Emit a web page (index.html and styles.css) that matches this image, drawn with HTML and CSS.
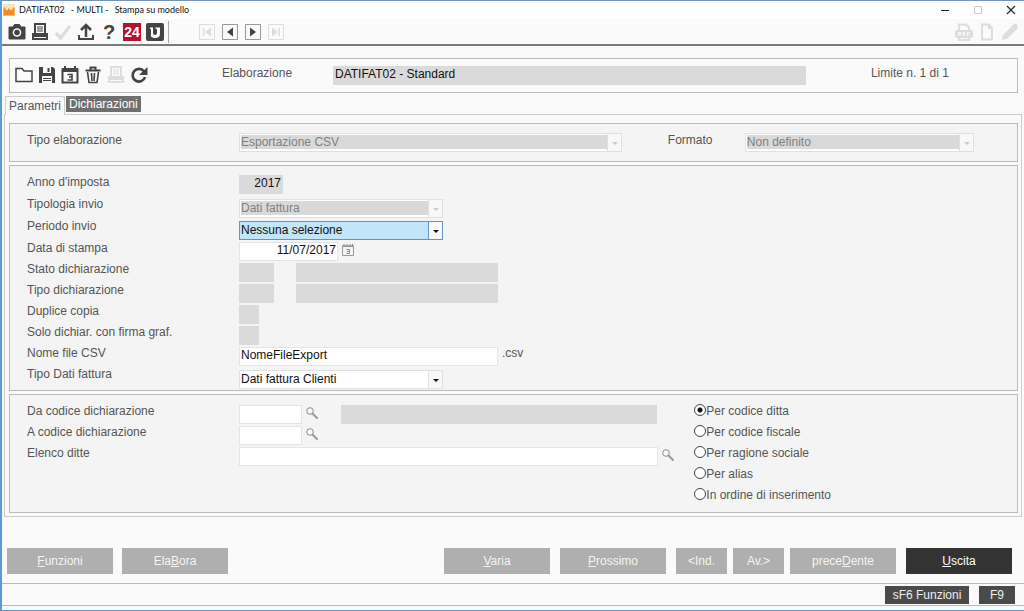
FILE: index.html
```html
<!DOCTYPE html>
<html lang="it">
<head>
<meta charset="utf-8">
<title>DATIFAT02 - MULTI - Stampa su modello</title>
<link rel="stylesheet" href="styles.css">
</head>
<body>
<svg class="symbols" aria-hidden="true">
  <symbol id="search" viewBox="0 0 12 12"><circle cx="4" cy="4" r="3.3" fill="#f8f8f8" stroke="#8c8c8c"/><path d="M6.7 6.7 11 11" stroke="#999" stroke-width="2" stroke-linecap="round"/></symbol>
  <symbol id="printer" viewBox="0 0 18 18"><path d="M4 1h10v10H4z" fill="none" stroke="currentColor" stroke-width="2"/><path d="M6 4h6M6 6h6M6 8h6" stroke="currentColor"/><path d="M1 10h2v2h12v-2h2v7H1z" fill="currentColor"/><path d="M3 14.5h12" stroke="#fafafa"/></symbol>
</svg>
<div class="window">
  <header class="titlebar">
    <svg class="app-icon" viewBox="0 0 12 12"><path d="M0 0h12v12H0z" fill="#f6b95b"/><path d="M0 0h12v3L6 8 0 3z" fill="#fbe3bb"/><path d="m1 3 3 4 2-3 2 3 3-4v8H1z" fill="#ef8f22"/></svg>
    <h1 class="title"><span>DATIFAT02</span><span>- MULTI -</span><span>Stampa su modello</span></h1>
    <div class="window-controls">
      <button aria-label="Riduci"><svg viewBox="0 0 10 10"><path d="M1 5.5h8" stroke="#222"/></svg></button>
      <button aria-label="Ingrandisci" disabled><svg viewBox="0 0 10 10"><path d="M1.5 1.5h7v7h-7z" fill="none" stroke="#ccc"/></svg></button>
      <button aria-label="Chiudi"><svg viewBox="0 0 10 10"><path d="m1 1 8 8M9 1 1 9" stroke="#222" stroke-width="1.1"/></svg></button>
    </div>
  </header>

  <nav class="toolbar">
    <div class="icons">
      <button aria-label="Istantanea"><svg viewBox="0 0 18 18"><path d="M1 4h4l1.500-2.500h5L13 4h4v12H1z" fill="currentColor" stroke="currentColor" stroke-linejoin="round"/><circle cx="9" cy="9.500" r="4.300" fill="#fafafa"/><circle cx="9" cy="9.500" r="2.800" fill="currentColor"/></svg></button>
      <button aria-label="Stampa"><svg><use href="#printer"/></svg></button>
      <button aria-label="Conferma" disabled><svg viewBox="0 0 18 18"><path d="m2 10 4.500 5L16 3" fill="none" stroke="currentColor" stroke-width="3.500"/></svg></button>
      <button aria-label="Esporta"><svg viewBox="0 0 18 18"><path d="M9 3v11M4 7l5-5 5 5" fill="none" stroke="currentColor" stroke-width="2.500"/><path d="M2 12v4h14v-4" fill="none" stroke="currentColor" stroke-width="2"/></svg></button>
      <button class="glyph" aria-label="Aiuto">?</button>
      <button class="glyph red" aria-label="24">24</button>
      <button aria-label="Unico"><svg viewBox="0 0 18 18"><rect x="0" y="0" width="18" height="18" rx="2" fill="currentColor"/><path d="M4 4.500h3V10q0 2 2 2t2-2V6H9.500V4.500H14V11q0 4-5 4T5 11V6H4z" fill="#fff"/></svg></button>
    </div>
    <div class="icons nav-icons">
      <button aria-label="Primo" disabled><svg viewBox="0 0 18 18"><path d="M1.500 1.500h15v15h-15z" fill="none" stroke="currentColor"/><path d="M5 5h1.500v8H5zM13 4.500v9L7 9z" fill="currentColor"/></svg></button>
      <button aria-label="Indietro"><svg viewBox="0 0 18 18"><path d="M1.500 1.500h15v15h-15z" fill="none" stroke="#999"/><path d="M12 4.500v9L6 9z" fill="currentColor"/></svg></button>
      <button aria-label="Avanti"><svg viewBox="0 0 18 18"><path d="M1.500 1.500h15v15h-15z" fill="none" stroke="#999"/><path d="M6 4.500v9L12 9z" fill="currentColor"/></svg></button>
      <button aria-label="Ultimo" disabled><svg viewBox="0 0 18 18"><path d="M1.500 1.500h15v15h-15z" fill="none" stroke="currentColor"/><path d="M11.500 5H13v8h-1.500zM5 4.500v9L11 9z" fill="currentColor"/></svg></button>
    </div>
    <div class="icons end">
      <button aria-label="PDF" disabled><svg viewBox="0 0 18 18"><path d="M4 8V1.500h7L14 4.500V8" fill="none" stroke="currentColor" stroke-width="2"/><rect x="0" y="7" width="18" height="8" rx="2" fill="currentColor"/><path d="M4 14v3h10v-3" fill="none" stroke="currentColor" stroke-width="2"/><path d="M3.500 13V9.500h2v2h-2M8 9.500v3h1.500l.5-1.500-.5-1.500zM12.500 13V9.500H15M12.500 11.500h2" fill="none" stroke="#fafafa"/></svg></button>
      <button aria-label="Documento" disabled><svg viewBox="0 0 18 18"><path d="M4 1.500h7L14 5v11.500H4z" fill="none" stroke="currentColor" stroke-width="2"/><path d="M10 1v5h5z" fill="currentColor"/></svg></button>
      <button aria-label="Modifica" disabled><svg viewBox="0 0 18 18"><path d="m1 17 1-5L13 1q2-1 3 .500T17 5L6 16z" fill="currentColor"/></svg></button>
    </div>
  </nav>

  <main class="content">
    <section class="panel summary">
      <div class="icons">
        <button aria-label="Apri"><svg viewBox="0 0 18 18"><path d="M1 15.500v-13h6l2 2.500h8v10.500z" fill="none" stroke="currentColor" stroke-width="1.500"/></svg></button>
        <button aria-label="Salva"><svg viewBox="0 0 18 18"><path d="M1 1h14l2 2v14H1z" fill="currentColor"/><path d="M5 1v6h8V1M4 17v-7h10v7" fill="#fafafa"/><path d="M9.500 2h2v4h-2zM5 12h8v1H5zm0 2h8v1H5z" fill="currentColor"/></svg></button>
        <button aria-label="Calendario"><svg viewBox="0 0 18 18"><path d="M1.500 3.500h15v13h-15z" fill="none" stroke="currentColor" stroke-width="2"/><path d="M1 2h16v4H1zM3 0h2v2H3zm10 0h2v2h-2z" fill="currentColor"/><path d="M6.500 8.500h4.500v5.500H6.500M8 11h3" fill="none" stroke="currentColor" stroke-width="1.600"/></svg></button>
        <button aria-label="Elimina"><svg viewBox="0 0 18 18"><path d="M1.500 4.500h15M6.500 4V1.500h5V4" fill="none" stroke="currentColor" stroke-width="2"/><path d="m3.500 6 1.500 10.500h8L14.500 6M7.500 7l.5 8M10.500 7l-.5 8" fill="none" stroke="currentColor" stroke-width="1.600"/></svg></button>
        <button aria-label="Stampa elenco" disabled><svg><use href="#printer"/></svg></button>
        <button aria-label="Aggiorna"><svg viewBox="0 0 18 18"><path d="M14 5.500A6.300 6.300 0 1 0 15 11" fill="none" stroke="currentColor" stroke-width="2.700"/><path d="M17.500 1v8H9z" fill="currentColor"/></svg></button>
      </div>
      <label for="elaborazione">Elaborazione</label>
      <input id="elaborazione" class="field locked" value="DATIFAT02 - Standard" readonly>
      <span class="limit">Limite n. 1 di 1</span>
    </section>

    <div class="tabs" role="tablist">
      <button class="tab selected" role="tab" aria-selected="true">Parametri</button>
      <button class="tab" role="tab" aria-selected="false">Dichiarazioni</button>
    </div>

    <form class="page">
      <section class="panel kind">
        <label for="tipo">Tipo elaborazione</label>
        <div class="combo"><select id="tipo" disabled><option>Esportazione CSV</option></select></div>
        <label for="formato">Formato</label>
        <div class="combo"><select id="formato" disabled><option>Non definito</option></select></div>
      </section>

      <section class="panel details">
        <div class="row tall"><label for="anno">Anno d'imposta</label><input id="anno" class="field locked number w-year" value="2017" readonly></div>
        <div class="row tall"><label for="tipologia">Tipologia invio</label><div class="combo w-combo"><select id="tipologia" disabled><option>Dati fattura</option></select></div></div>
        <div class="row tall"><label for="periodo">Periodo invio</label><div class="combo w-combo active"><select id="periodo"><option>Nessuna selezione</option></select></div></div>
        <div class="row"><label for="data">Data di stampa</label><input id="data" class="field number w-date" value="11/07/2017"><button type="button" class="mini" aria-label="Scegli data"><svg viewBox="0 0 12 12"><path d="M.5 2.500h11v9H.5z" fill="none" stroke="#999"/><path d="M0 2h12M2 0v2M5 0v2M8 0v2M10.500 0v2" stroke="#888"/><path d="M4.500 5.500h3v4h-3M5 7.500h2" fill="none" stroke="#888"/></svg></button></div>
        <div class="row"><label for="stato">Stato dichiarazione</label><input id="stato" class="field locked w-code" readonly><input class="field locked w-text" aria-label="Descrizione stato" readonly></div>
        <div class="row"><label for="tipodich">Tipo dichiarazione</label><input id="tipodich" class="field locked w-code" readonly><input class="field locked w-text" aria-label="Descrizione tipo" readonly></div>
        <div class="row"><label for="copia">Duplice copia</label><input id="copia" class="field locked w-flag" readonly></div>
        <div class="row"><label for="firma">Solo dichiar. con firma graf.</label><input id="firma" class="field locked w-flag" readonly></div>
        <div class="row"><label for="file">Nome file CSV</label><input id="file" class="field w-file" value="NomeFileExport"><span class="suffix">.csv</span></div>
        <div class="row"><label for="dati">Tipo Dati fattura</label><div class="combo w-combo"><select id="dati"><option>Dati fattura Clienti</option></select></div></div>
      </section>

      <section class="panel range">
        <div class="limits">
          <div class="row"><label for="da">Da codice dichiarazione</label><input id="da" class="field w-search"><button type="button" class="mini" aria-label="Cerca da codice"><svg><use href="#search"/></svg></button><input class="field locked w-rest" aria-label="Descrizione codice" readonly></div>
          <div class="row"><label for="a">A codice dichiarazione</label><input id="a" class="field w-search"><button type="button" class="mini" aria-label="Cerca a codice"><svg><use href="#search"/></svg></button></div>
          <div class="row"><label for="elenco">Elenco ditte</label><input id="elenco" class="field w-list"><button type="button" class="mini" aria-label="Cerca ditte"><svg><use href="#search"/></svg></button></div>
        </div>
        <div class="order" role="radiogroup" aria-label="Ordinamento">
          <label><input type="radio" name="ordine" checked>Per codice ditta</label>
          <label><input type="radio" name="ordine">Per codice fiscale</label>
          <label><input type="radio" name="ordine">Per ragione sociale</label>
          <label><input type="radio" name="ordine">Per alias</label>
          <label><input type="radio" name="ordine">In ordine di inserimento</label>
        </div>
      </section>
    </form>
  </main>

  <div class="actions">
    <button class="action"><u>F</u>unzioni</button>
    <button class="action">Ela<u>B</u>ora</button>
    <div class="moves">
      <button class="action"><u>V</u>aria</button>
      <button class="action"><u>P</u>rossimo</button>
      <div class="steps">
        <button class="action short">&lt;Ind.</button>
        <button class="action short">Av.&gt;</button>
        <button class="action">prece<u>D</u>ente</button>
      </div>
      <button class="action exit"><u>U</u>scita</button>
    </div>
  </div>

  <footer class="status">
    <button class="key">sF6 Funzioni</button>
    <button class="key small">F9</button>
  </footer>
</div>
</body>
</html>
```
FILE: styles.css
```css
* { box-sizing: border-box; }

body {
  margin: 0;
  font: 12px/14px "Liberation Sans", Arial, sans-serif;
  color: #555;
  background: #fafafa;
}

button, input, select { font: inherit; color: inherit; }
button { padding: 0; border: 0; background: none; }
svg { display: block; width: 100%; height: 100%; }
.symbols { display: none; }

.window {
  display: flex;
  flex-direction: column;
  min-height: 100vh;
  border: solid #5b9bd5;
  border-width: 1px 0 1px 2px;
  border-top-color: #7593b5;
}

/* Title bar */
.titlebar {
  display: flex;
  align-items: center;
  height: 18px;
  padding: 0 8px 0 1px;
  background: #fff;
}
.app-icon { width: 12px; height: 12px; }
.title {
  display: flex;
  gap: 6px;
  margin: 0 auto 0 4px;
  font: 9px/14px Lato, "Noto Sans", sans-serif;
  color: #111;
}
.window-controls { display: flex; gap: 23px; }
.window-controls button { width: 10px; height: 10px; }

/* Icon bars */
.toolbar {
  display: flex;
  align-items: center;
  height: 27px;
  padding: 0 5px 0 6px;
  border-bottom: 2px solid #7a7a7a;
}
.icons { display: flex; align-items: center; gap: 5px; color: #444; }
.icons button { width: 18px; height: 18px; }
.icons button:disabled { color: #ddd; }
.nav-icons { height: 22px; margin-left: 4px; padding-left: 29px; border-left: 1px solid #aaa; }
.end { margin-left: auto; }
.icons .glyph { font-weight: bold; font-size: 20px; line-height: 18px; }
.icons .red { font-size: 14px; color: #fff; background: #b5122b; }

/* Panels */
.content { padding: 12px 2px 0; }
.panel { border: 1px solid #bbb; }
.summary {
  display: flex;
  align-items: flex-start;
  height: 35px;
  margin: 0 4px 0 5px;
  padding: 7px 5px;
}
.summary .icons { flex: none; width: 207px; }
.summary label { flex: none; width: 111px; }
.summary .field { flex: 472 1 0; }
.limit { flex: 142 1 0; padding-left: 65px; white-space: nowrap; }

.tabs { display: flex; gap: 1px; height: 18px; margin: 3px 1px 0; }
.tab { height: 16px; padding: 0 3px; color: #fff; background: #6f6f6f; }
.tab.selected {
  height: 19px;
  border: 1px solid #ccc;
  border-bottom: 0;
  color: #555;
  background: #fafafa;
  z-index: 1;
}
.page {
  display: flex;
  flex-direction: column;
  gap: 3px;
  padding: 8px 3px 3px 4px;
  border: 1px solid #ccc;
  background: #fafafa;
}
.page .panel { padding: 9px 17px 0; background: #f4f4f4; }

.page .kind {
  display: grid;
  grid-template-columns: 212px minmax(0, 384fr) 46px 77px minmax(0, 230fr) minmax(0, 26fr);
  height: 39px;
}
.kind label:nth-of-type(2) { grid-column: 4; }
.page .details { padding-bottom: 1px; }

/* Form rows */
.row { display: flex; align-items: flex-start; min-height: 21px; }
.row.tall { min-height: 22px; }
.row > label { flex: none; width: 212px; }

.field {
  min-width: 0;
  height: 19px;
  padding: 0 1px 3px;
  border: 1px solid #e4e4e4;
  border-radius: 0;
  color: #111;
  background: #fff;
}
.row > .field { margin-top: 1px; }
.row.tall > .field { margin-top: 0; }
.field.locked { border-color: #dadada; background: #dadada; }
.number { text-align: right; }
.w-year { width: 44px; }
.w-date { width: 99px; }
.w-code { width: 35px; }
.w-text { width: 202px; margin-left: 22px; }
.w-flag { width: 20px; }
.w-file { width: 259px; }
.w-search { width: 63px; }
.w-rest { flex: 1; margin: 0 17px 0 23px; }
.w-list { flex: 1; }
.w-combo { width: 204px; }
.suffix { padding-left: 4px; }
.mini { flex: none; width: 12px; height: 12px; margin: 3px 0 0 4px; }

.combo {
  position: relative;
  height: 19px;
  border: 1px solid #e0e0e0;
  background: #fff;
}
.row > .combo { margin-top: 3px; }
.row.tall > .combo { margin-top: 2px; }
.combo select {
  display: block;
  width: 100%;
  height: 100%;
  padding: 0 14px 2px 1px;
  border: 0;
  border-radius: 0;
  outline: 0;
  appearance: none;
  color: #111;
  background: none;
}
.combo select:disabled {
  opacity: 1;
  color: #808080;
  background: linear-gradient(#d9d9d9, #d9d9d9) 1px 1px / calc(100% - 15px) calc(100% - 3px) no-repeat;
}
.combo::before {
  content: "";
  position: absolute;
  inset: 0 0 0 auto;
  width: 13px;
  border-left: 1px solid #e0e0e0;
  background: #f8f8f8;
  pointer-events: none;
}
.combo::after {
  content: "";
  position: absolute;
  right: 3px;
  top: 8px;
  border: solid transparent;
  border-width: 3px 3px 0;
  border-top-color: #111;
  pointer-events: none;
}
.combo:has(select:disabled)::after { border-top-color: #ccc; }
.combo.active { border-color: #6495c0; background: #c2e5fa; }
.combo.active::before { border-color: #6495c0; }

/* Code range and ordering */
.page .range {
  display: grid;
  grid-template-columns: minmax(0, 648fr) minmax(0, 306fr);
  gap: 20px;
  padding-bottom: 3px;
}
.order { display: flex; flex-direction: column; }
.order label { display: flex; align-items: flex-start; height: 21px; }
.order input {
  appearance: none;
  width: 12px;
  height: 12px;
  margin: 0;
  border: 1px solid #444;
  border-radius: 50%;
  background: #fff;
}
.order input:checked { background: radial-gradient(circle, #111 2px, #fff 3px); }

/* Action buttons */
.actions { display: flex; gap: 9px; margin-top: auto; padding: 24px 12px 9px 5px; }
.moves { display: flex; gap: 10px; margin-left: auto; }
.steps { display: flex; gap: 6px; }
.action { width: 106px; height: 26px; color: #f4f4f4; background: #afafaf; }
.action.short { width: 51px; }
.action.exit { color: #fff; background: #333; }

.status {
  display: flex;
  justify-content: flex-end;
  align-items: center;
  gap: 10px;
  height: 23px;
  margin-bottom: 4px;
  padding-right: 9px;
  border: solid #bbb;
  border-width: 1px 0;
}
.key { width: 84px; height: 18px; color: #eee; background: #4a4a4a; }
.key.small { width: 36px; }
```
